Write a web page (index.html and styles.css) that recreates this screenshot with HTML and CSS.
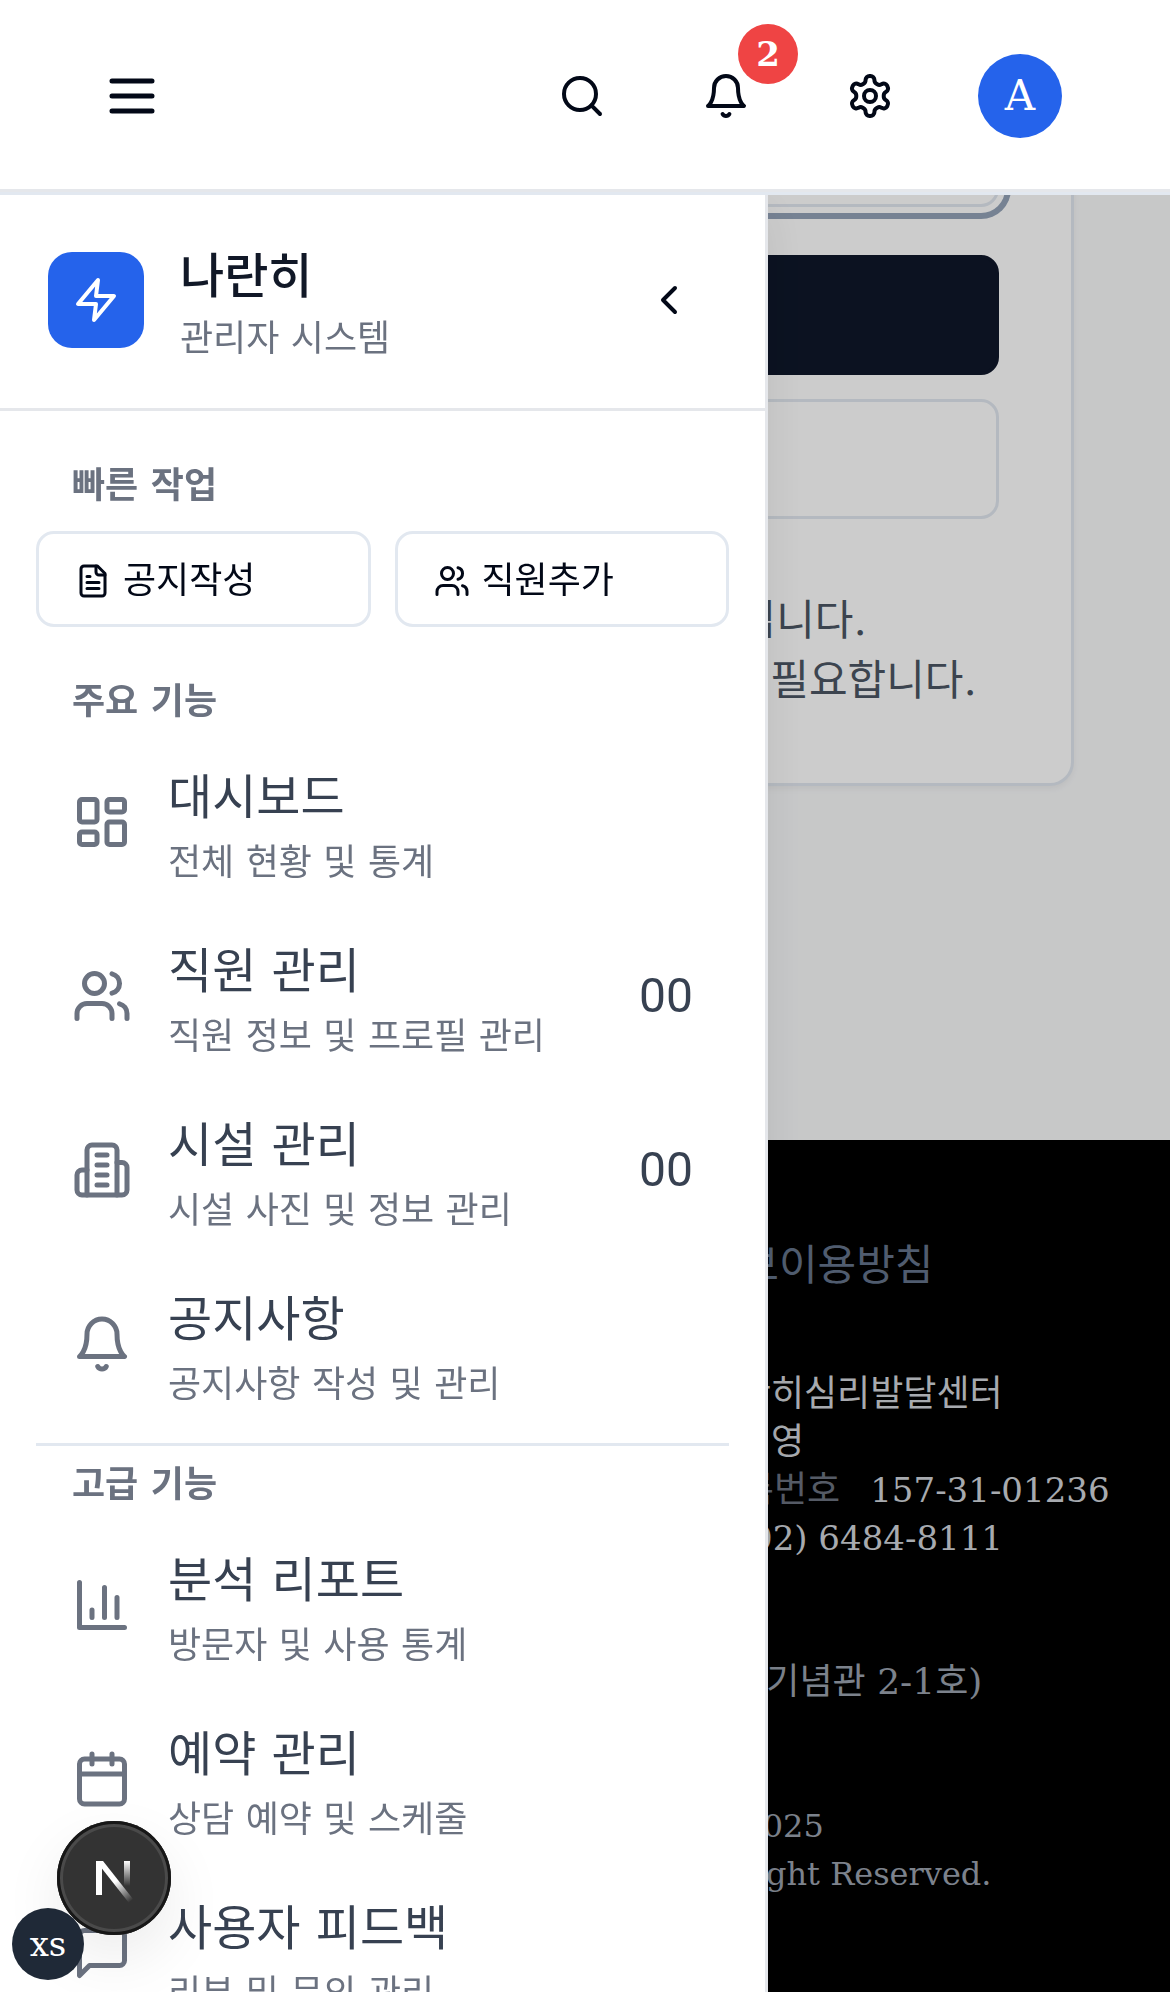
FILE: index.html
```html
<!DOCTYPE html>
<html lang="ko">
<head>
<meta charset="utf-8">
<meta name="viewport" content="width=device-width, initial-scale=1">
<title>나란히 관리자 시스템</title>
<link rel="stylesheet" href="styles.css">
</head>
<body>
<svg class="sprite" aria-hidden="true">
  <symbol id="users" viewBox="0 0 24 24"><path d="M16 21v-2a4 4 0 0 0-4-4H6a4 4 0 0 0-4 4v2"/><circle cx="9" cy="7" r="4"/><path d="M22 21v-2a4 4 0 0 0-3-3.87M16 3.13a4 4 0 0 1 0 7.75"/></symbol>
  <symbol id="bell" viewBox="0 0 24 24"><path d="M6 8a6 6 0 0 1 12 0c0 7 3 9 3 9H3s3-2 3-9"/><path d="M10.3 21a1.94 1.94 0 0 0 3.4 0"/></symbol>
</svg>

<header class="topbar">
  <button class="icon-btn" aria-label="메뉴"><svg class="icon icon-lg" viewBox="0 0 24 24"><path d="M4 6h16M4 12h16M4 18h16"/></svg></button>
  <div class="topbar-actions">
    <button class="icon-btn" aria-label="검색"><svg class="icon" viewBox="0 0 24 24"><circle cx="11" cy="11" r="8"/><path d="m21 21-4.3-4.3"/></svg></button>
    <button class="icon-btn" aria-label="알림"><svg class="icon"><use href="#bell"/></svg><span class="count">2</span></button>
    <button class="icon-btn" aria-label="설정"><svg class="icon" viewBox="0 0 24 24"><path d="M12.22 2h-.44a2 2 0 0 0-2 2v.18a2 2 0 0 1-1 1.73l-.43.25a2 2 0 0 1-2 0l-.15-.08a2 2 0 0 0-2.73.73l-.22.38a2 2 0 0 0 .73 2.73l.15.1a2 2 0 0 1 1 1.72v.51a2 2 0 0 1-1 1.74l-.15.09a2 2 0 0 0-.73 2.73l.22.38a2 2 0 0 0 2.73.73l.15-.08a2 2 0 0 1 2 0l.43.25a2 2 0 0 1 1 1.73V20a2 2 0 0 0 2 2h.44a2 2 0 0 0 2-2v-.18a2 2 0 0 1 1-1.73l.43-.25a2 2 0 0 1 2 0l.15.08a2 2 0 0 0 2.73-.73l.22-.39a2 2 0 0 0-.73-2.73l-.15-.08a2 2 0 0 1-1-1.74v-.5a2 2 0 0 1 1-1.74l.15-.09a2 2 0 0 0 .73-2.73l-.22-.38a2 2 0 0 0-2.73-.73l-.15.08a2 2 0 0 1-2 0l-.43-.25a2 2 0 0 1-1-1.73V4a2 2 0 0 0-2-2z"/><circle cx="12" cy="12" r="3"/></svg></button>
    <button class="account" aria-label="계정"><span class="avatar">A</span></button>
  </div>
</header>

<main class="page">
  <form class="card">
    <input class="field" type="password" aria-label="비밀번호">
    <button class="btn btn-dark" type="button">로그인</button>
    <button class="btn btn-outline" type="button">돌아가기</button>
    <div class="card-note">
      <p>관리자 전용 시스템 화면입니다.</p>
      <p>이 기능은 센터 관리자의 승인이 필요합니다.</p>
    </div>
  </form>
</main>

<footer class="footer">
  <a class="policy" href="#">개인정보이용방침</a>
  <dl class="company">
    <div><dt>상호</dt><dd>나란히심리발달센터</dd></div>
    <div><dt>대표</dt><dd>김지영</dd></div>
    <div><dt>사업자등록번호</dt><dd class="latin">157-31-01236</dd></div>
    <div><dt>연락처</dt><dd class="latin">(02) 6484-8111</dd></div>
  </dl>
  <p class="muted">서울 (백범기념관 2-1호)</p>
  <div class="muted copyright">
    <p>Center, 2025</p>
    <p>Co. All Right Reserved.</p>
  </div>
</footer>

<div class="overlay"></div>

<aside class="drawer">
  <div class="brand">
    <span class="brand-mark"><svg class="icon" viewBox="0 0 24 24"><path d="M13 2 3 14h9l-1 8 10-12h-9l1-8z"/></svg></span>
    <div class="brand-text">
      <h1>나란히</h1>
      <p>관리자 시스템</p>
    </div>
    <button class="collapse" aria-label="접기"><svg class="icon" viewBox="0 0 24 24"><path d="m15 18-6-6 6-6"/></svg></button>
  </div>

  <div class="drawer-body">
    <section>
      <h2>빠른 작업</h2>
      <div class="quick">
        <button><svg class="icon icon-sm" viewBox="0 0 24 24"><path d="M15 2H6a2 2 0 0 0-2 2v16a2 2 0 0 0 2 2h12a2 2 0 0 0 2-2V7Z"/><path d="M14 2v4a2 2 0 0 0 2 2h4M10 9H8M16 13H8M16 17H8"/></svg>공지작성</button>
        <button><svg class="icon icon-sm"><use href="#users"/></svg>직원추가</button>
      </div>
    </section>

    <nav class="group" aria-label="주요 기능">
      <h2>주요 기능</h2>
      <ul>
        <li><a href="#"><svg class="icon icon-lg" viewBox="0 0 24 24"><rect x="3" y="3" width="7" height="9" rx="1"/><rect x="14" y="3" width="7" height="5" rx="1"/><rect x="14" y="12" width="7" height="9" rx="1"/><rect x="3" y="16" width="7" height="5" rx="1"/></svg><span class="label"><strong>대시보드</strong><small>전체 현황 및 통계</small></span></a></li>
        <li><a href="#"><svg class="icon icon-lg"><use href="#users"/></svg><span class="label"><strong>직원 관리</strong><small>직원 정보 및 프로필 관리</small></span><span class="total">00</span></a></li>
        <li><a href="#"><svg class="icon icon-lg" viewBox="0 0 24 24"><path d="M6 22V4a2 2 0 0 1 2-2h8a2 2 0 0 1 2 2v18Z"/><path d="M6 12H4a2 2 0 0 0-2 2v6a2 2 0 0 0 2 2h2M18 9h2a2 2 0 0 1 2 2v9a2 2 0 0 1-2 2h-2M10 6h4M10 10h4M10 14h4M10 18h4"/></svg><span class="label"><strong>시설 관리</strong><small>시설 사진 및 정보 관리</small></span><span class="total">00</span></a></li>
        <li><a href="#"><svg class="icon icon-lg"><use href="#bell"/></svg><span class="label"><strong>공지사항</strong><small>공지사항 작성 및 관리</small></span></a></li>
      </ul>
    </nav>

    <nav class="group divided" aria-label="고급 기능">
      <h2>고급 기능</h2>
      <ul>
        <li><a href="#"><svg class="icon icon-lg" viewBox="0 0 24 24"><path d="M3 3v18h18M18 17V9M13 17V5M8 17v-3"/></svg><span class="label"><strong>분석 리포트</strong><small>방문자 및 사용 통계</small></span></a></li>
        <li><a href="#"><svg class="icon icon-lg" viewBox="0 0 24 24"><rect x="3" y="4" width="18" height="18" rx="2"/><path d="M8 2v4M16 2v4M3 10h18"/></svg><span class="label"><strong>예약 관리</strong><small>상담 예약 및 스케줄</small></span></a></li>
        <li><a href="#"><svg class="icon icon-lg" viewBox="0 0 24 24"><path d="M21 15a2 2 0 0 1-2 2H7l-4 4V5a2 2 0 0 1 2-2h14a2 2 0 0 1 2 2z"/></svg><span class="label"><strong>사용자 피드백</strong><small>리뷰 및 문의 관리</small></span></a></li>
      </ul>
    </nav>
  </div>
</aside>

<button class="dev-badge" aria-label="Next.js">
  <svg viewBox="0 0 114 114">
    <defs>
      <linearGradient id="fade-diag" gradientUnits="userSpaceOnUse" x1="58" y1="61" x2="73" y2="81"><stop offset="0" stop-color="#fff"/><stop offset="1" stop-color="#fff" stop-opacity="0"/></linearGradient>
      <linearGradient id="fade-stem" gradientUnits="userSpaceOnUse" x1="0" y1="40" x2="0" y2="65"><stop offset="0" stop-color="#fff"/><stop offset="1" stop-color="#fff" stop-opacity="0"/></linearGradient>
    </defs>
    <path fill="#fff" d="M39 40h6v34h-6z"/>
    <path fill="url(#fade-diag)" d="M39 40h7l30 38-4 4-33-42z"/>
    <path fill="url(#fade-stem)" d="M67 40h6v25h-6z"/>
  </svg>
</button>
<div class="breakpoint">xs</div>
</body>
</html>
```

FILE: styles.css
```css
* { box-sizing: border-box; margin: 0; padding: 0; }

body {
  background: #000;
  color: #020817;
  font-family: "DejaVu Serif", "Noto Sans CJK KR", serif;
  font-size: 36px;
  line-height: 48px;
}

button { background: none; border: 0; color: inherit; font: inherit; cursor: pointer; }
a { color: inherit; text-decoration: none; }
ul { list-style: none; }

.sprite { position: absolute; width: 0; height: 0; }

.icon {
  flex: none;
  width: 48px;
  height: 48px;
  fill: none;
  stroke: currentColor;
  stroke-width: 2;
  stroke-linecap: round;
  stroke-linejoin: round;
}
.icon-sm { width: 36px; height: 36px; }
.icon-lg { width: 60px; height: 60px; }
.latin { font-size: 34px; }

/* Top bar */
.topbar {
  position: fixed;
  inset: 0 0 auto;
  z-index: 30;
  display: flex;
  align-items: center;
  justify-content: space-between;
  height: 195px;
  padding: 0 72px;
  background: #fff;
  border-bottom: 3px solid #e2e8f0;
  box-shadow: inset 0 -3px #e5e7eb;
}
.topbar-actions { display: flex; align-items: center; }
.icon-btn {
  position: relative;
  display: flex;
  align-items: center;
  justify-content: center;
  width: 144px;
  height: 108px;
}
.topbar > .icon-btn { width: 120px; }
.count {
  position: absolute;
  top: -18px;
  right: 0;
  width: 60px;
  height: 60px;
  border-radius: 50%;
  background: #ef4444;
  color: #fff;
  font-size: 34px;
  font-weight: 700;
  line-height: 60px;
}
.account { padding: 0 36px; }
.avatar {
  display: block;
  width: 84px;
  height: 84px;
  border-radius: 50%;
  background: #2563eb;
  color: #fff;
  font-size: 42px;
  line-height: 84px;
}

/* Page behind the drawer */
.page { padding: 0 96px 354px; background: #f9fafb; }
.card {
  display: flex;
  flex-direction: column;
  gap: 24px;
  padding: 87px 72px 72px;
  background: #fff;
  border: 3px solid #e2e8f0;
  border-top: 0;
  border-radius: 0 0 24px 24px;
  box-shadow: 0 3px 6px rgba(0, 0, 0, .05);
}
.field, .btn { width: 100%; height: 120px; border: 3px solid #e2e8f0; border-radius: 18px; }
.field {
  margin-bottom: 24px;
  padding: 0 36px;
  background: #fff;
  font: inherit;
  box-shadow: 0 0 0 6px #fff, 0 0 0 12px #94a3b8;
}
.btn-dark { background: #0f172a; border-color: #0f172a; color: #fff; }
.btn-outline { background: #fff; }
.card-note {
  margin-top: 48px;
  padding-left: 8px;
  color: #4b5563;
  font-size: 42px;
  line-height: 60px;
  text-align: center;
}

.footer {
  display: flex;
  flex-direction: column;
  padding: 96px 0 90px 52%;
  background: #000;
  white-space: nowrap;
}
.policy { margin-bottom: 74px; padding-left: 16px; color: #64748b; font-size: 42px; line-height: 60px; }
.company div { display: flex; gap: 30px; }
.company dt { color: #6b7280; }
.company dd { color: #d1d5db; }
.muted { margin-top: 96px; color: #9ca3af; }
.copyright { padding-left: 6px; font-size: 32px; }

.overlay { position: fixed; inset: 0; z-index: 10; background: rgba(0, 0, 0, .2); }

/* Drawer */
.drawer {
  position: fixed;
  top: 195px;
  bottom: 0;
  left: 0;
  z-index: 20;
  width: 768px;
  max-width: 100%;
  overflow: hidden;
  background: #fff;
  border-right: 3px solid #e5e7eb;
  box-shadow: 0 12px 45px rgba(0, 0, 0, .08);
}
.brand {
  display: flex;
  align-items: flex-start;
  gap: 36px;
  padding: 45px 48px;
  border-bottom: 3px solid #e5e7eb;
}
.brand-mark, .collapse {
  display: flex;
  align-items: center;
  justify-content: center;
  width: 96px;
  height: 96px;
  margin-top: 12px;
  border-radius: 24px;
}
.brand-mark { background: #2563eb; color: #fff; }
.brand-text { display: flex; flex: 1; flex-direction: column; gap: 3px; }
.brand-text h1 { color: #111827; font-size: 48px; font-weight: 500; line-height: 72px; }
.brand-text p { color: #6b7280; }

.drawer-body { padding: 36px; }
.drawer-body h2 { padding: 14px 36px 10px; color: #6b7280; font-size: 36px; font-weight: 700; line-height: 48px; }
.quick { display: grid; grid-template-columns: 1fr 1fr; gap: 24px; margin-top: 12px; }
.quick button {
  display: flex;
  align-items: center;
  gap: 12px;
  height: 96px;
  padding: 3px 36px 0;
  border: 3px solid #e2e8f0;
  border-radius: 18px;
}
.group { margin-top: 36px; }
.group.divided { margin-top: 18px; border-top: 3px solid #e2e8f0; }
.group ul { display: flex; flex-direction: column; gap: 12px; margin-top: 6px; }
.group a { display: flex; align-items: center; gap: 36px; padding: 16px 36px; color: #6b7280; }
.label { display: flex; flex: 1; flex-direction: column; gap: 6px; padding-top: 4px; }
.label strong { color: #374151; font-size: 48px; font-weight: 400; line-height: 72px; }
.label small { font-size: 36px; }
.total { color: #374151; font-family: Roboto, sans-serif; font-size: 48px; }

/* Development indicators */
.dev-badge {
  position: fixed;
  left: 57px;
  bottom: 57px;
  z-index: 40;
  width: 114px;
  height: 114px;
  border-radius: 50%;
  background: #333;
  box-shadow: inset 0 0 0 3px #171717, inset 0 0 0 6px #4a4a4a, 0 24px 60px rgba(0, 0, 0, .08);
}
.dev-badge svg { display: block; width: 100%; height: 100%; }
.breakpoint {
  position: fixed;
  left: 12px;
  bottom: 12px;
  z-index: 50;
  width: 72px;
  height: 72px;
  border-radius: 50%;
  background: #1f2937;
  color: #fff;
  font-size: 34px;
  line-height: 72px;
  text-align: center;
}
```
